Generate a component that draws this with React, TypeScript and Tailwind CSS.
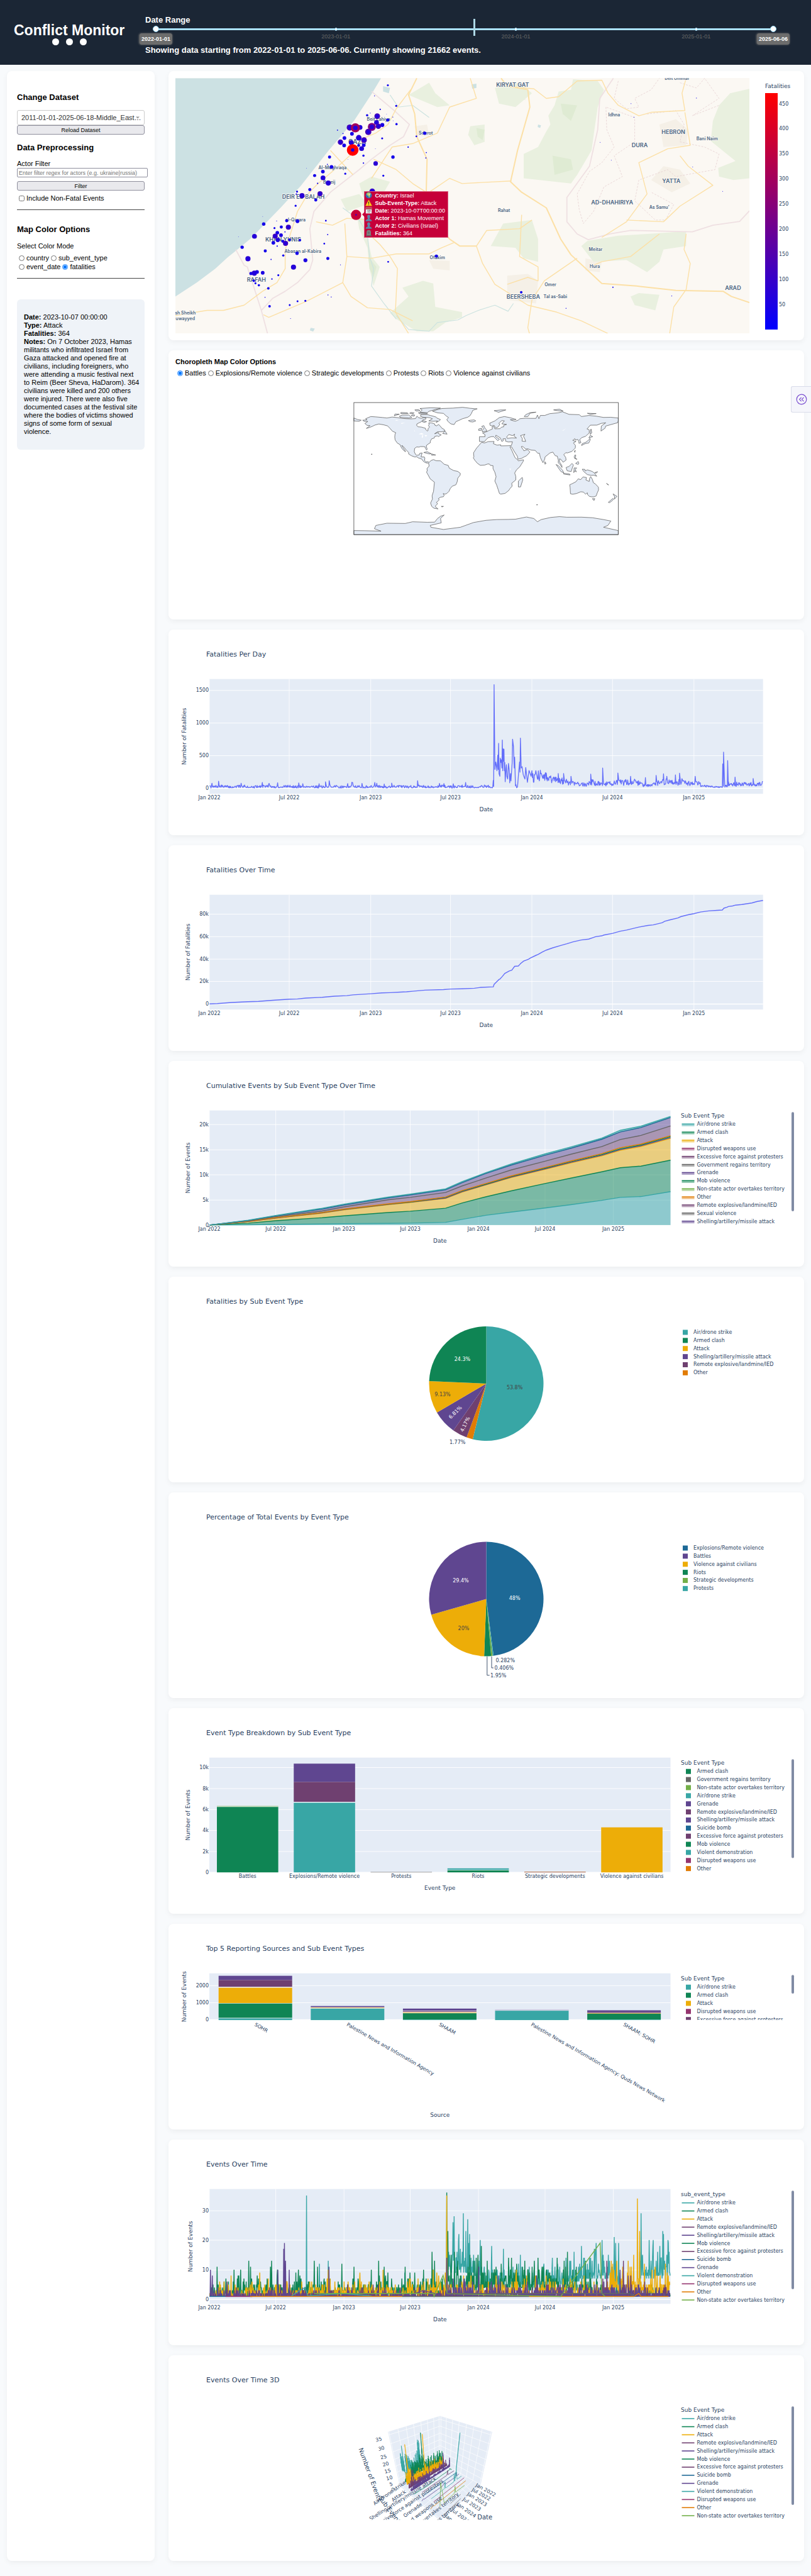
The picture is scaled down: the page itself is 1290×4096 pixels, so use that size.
import React from "react";

const TEAL = "#38A6A5";
const GREEN = "#0F8554";
const GOLD = "#EDAD08";
const MAGENTA = "#94346E";
const PLUM = "#6F4070";
const GREY = "#666666";
const PURPLE = "#5F4690";
const LIME = "#73AF48";
const ORANGE = "#E17C05";
const BLUE = "#1D6996";
const INK = "#2a3f5f";
const PLOT = "#E5ECF6";

type Pt = [number, number];

function makeRandom(seed: number) {
  let s = seed;
  return () => {
    s = (s * 1664525 + 1013904223) % 4294967296;
    return s / 4294967296;
  };
}

function interp(anchors: Pt[], x: number) {
  for (let i = 1; i < anchors.length; i++) {
    if (x <= anchors[i][0]) {
      const [x0, y0] = anchors[i - 1];
      const [x1, y1] = anchors[i];
      return y0 + ((y1 - y0) * (x - x0)) / (x1 - x0 || 1);
    }
  }
  return anchors[anchors.length - 1][1];
}

const toPoints = (p: Pt[]) => p.map(([x, y]) => `${x.toFixed(1)},${y.toFixed(1)}`).join(" ");

/* ---------- shared chart parts ---------- */

function Txt({
  x,
  y,
  children,
  anchor = "start",
  size = "text-[8px]",
  rotate,
  fill = INK,
}: {
  x: number;
  y: number;
  children: React.ReactNode;
  anchor?: "start" | "middle" | "end";
  size?: string;
  rotate?: number;
  fill?: string;
}) {
  return (
    <text
      x={x}
      y={y}
      fill={fill}
      textAnchor={anchor}
      dominantBaseline="central"
      className={size}
      transform={rotate === undefined ? undefined : `rotate(${rotate} ${x} ${y})`}
    >
      {children}
    </text>
  );
}

const CARD = "rounded-lg bg-white shadow-[0_3px_8px_rgba(0,0,0,0.05)]";

function ChartCard({ title, children }: { title: string; children: React.ReactNode }) {
  return (
    <section className={`${CARD} flex flex-col font-['DejaVu_Sans',sans-serif]`}>
      <h2 className="pt-8 pl-[60px] text-[11px] leading-4 text-[#2a3f5f]">{title}</h2>
      <svg viewBox="0 48 1011 279" className="block w-full" role="img" aria-label={title}>
        {children}
      </svg>
    </section>
  );
}

type Tick = [number, string];

function Axes({
  right,
  top = 78.7,
  bottom = 261.2,
  xt,
  yt,
  xTitle,
  yTitle,
  yTitleX = 31,
  xTitleY = 286,
}: {
  right: number;
  top?: number;
  bottom?: number;
  xt: Tick[];
  yt: Tick[];
  xTitle: string;
  yTitle: string;
  yTitleX?: number;
  xTitleY?: number;
}) {
  return (
    <g>
      <rect x="65" y={top} width={right - 65} height={bottom - top} fill={PLOT} />
      {xt.map(([x, l]) => (
        <g key={l}>
          <line x1={x} x2={x} y1={top} y2={bottom} stroke="#fff" strokeWidth=".8" />
          <Txt x={x} y={267} anchor="middle">
            {l}
          </Txt>
        </g>
      ))}
      {yt.map(([y, l]) => (
        <g key={l}>
          <line x1="65" x2={right} y1={y} y2={y} stroke="#fff" strokeWidth={l === "0" ? 1.5 : 0.9} />
          <Txt x={64} y={y} anchor="end">
            {l}
          </Txt>
        </g>
      ))}
      <Txt x={(65 + right) / 2} y={xTitleY} anchor="middle" size="text-[9px]">
        {xTitle}
      </Txt>
      <Txt x={yTitleX} y={(top + bottom) / 2} anchor="middle" size="text-[9px]" rotate={-90}>
        {yTitle}
      </Txt>
    </g>
  );
}

type Item = [string, string];

function Legend({
  title,
  items,
  kind,
  bar,
}: {
  title?: string;
  items: Item[];
  kind: "area" | "line" | "box" | "pie";
  bar?: number;
}) {
  const first = title ? 100.7 : 88.5;
  return (
    <g>
      {title && (
        <Txt x={815} y={87.3} size="text-[9px]">
          {title}
        </Txt>
      )}
      {items.map(([label, color], i) => {
        const y = first + i * 12.87;
        return (
          <g key={label}>
            {kind === "area" && (
              <>
                <rect x="816.5" y={y} width="20" height="3" fill={color} opacity=".5" />
                <line x1="816.5" x2="836.5" y1={y - 0.5} y2={y - 0.5} stroke={color} strokeWidth="1.5" />
              </>
            )}
            {kind === "line" && (
              <line x1="816.5" x2="836.5" y1={y} y2={y} stroke={color} strokeWidth="1.6" />
            )}
            {kind === "box" && <rect x="823" y={y - 4} width="8" height="8" fill={color} />}
            {kind === "pie" && <rect x="818" y={y - 4} width="8" height="8" fill={color} />}
            <Txt x={kind === "pie" ? 835 : 840.5} y={y}>
              {label}
            </Txt>
          </g>
        );
      })}
      {bar && <rect x="991" y="81.3" width="4" height={bar - 81.3} rx="2" fill="#808BA4" />}
    </g>
  );
}

/* ---------- fatalities line charts ---------- */

const WIDE_X: Tick[] = [
  [65, "Jan 2022"],
  [192, "Jul 2022"],
  [321.7, "Jan 2023"],
  [448.6, "Jul 2023"],
  [578, "Jan 2024"],
  [706.3, "Jul 2024"],
  [835.8, "Jan 2025"],
];
const NARROW_X: Tick[] = [
  [65, "Jan 2022"],
  [170.6, "Jul 2022"],
  [279.2, "Jan 2023"],
  [384.5, "Jul 2023"],
  [493, "Jan 2024"],
  [599, "Jul 2024"],
  [707.6, "Jan 2025"],
];

function FatalitiesPerDay() {
  const rnd = makeRandom(7);
  const pts: Pt[] = [];
  for (let x = 106; x < 796; x += 1.2) {
    const spike = rnd() > 0.97 ? 14 : 0;
    pts.push([x, 594 - (1 + Math.pow(rnd(), 1.5) * 9 + 2.5 * Math.sin(x / 17) * Math.sin(x / 17) + spike)]);
  }
  for (const [x, y] of [[128, 568], [388, 570], [397, 566], [452, 572], [549, 575], [612, 566], [323, 574]] as Pt[]) {
    const at = pts.findIndex((p) => p[0] >= x);
    pts[at] = [x, y];
  }
  const burst: Pt[] = [
    [796, 565], [797, 587], [798, 216], [800, 525], [802, 498], [803, 505], [805, 530], [807, 473], [808, 525],
    [809, 430], [810, 540], [812, 550], [813, 484], [815, 500], [816, 490], [817, 520], [818, 418], [819, 530],
    [820, 450], [821, 495], [822, 451], [823, 530], [824, 500], [825, 570], [827, 520], [828, 508], [829, 550],
    [831, 560], [833, 503], [835, 530], [836, 574], [838, 540], [839, 567], [842, 500], [843, 415], [845, 440],
    [847, 520], [848, 480], [850, 585], [851, 580], [853, 592], [855, 588], [857, 550], [860, 498], [861, 535],
    [862, 411], [864, 520], [866, 515], [869, 545], [873, 560], [875, 518], [879, 572], [883, 529], [888, 550],
  ];
  pts.push(...burst);
  const level: Pt[] = [
    [888, 48], [912, 48], [930, 38], [960, 28], [990, 24], [1020, 13], [1035, 24], [1060, 16], [1100, 22],
    [1140, 26], [1165, 12], [1185, 16], [1215, 28], [1240, 22], [1255, 28], [1275, 18], [1290, 22], [1310, 9],
    [1350, 5], [1352, 5], [1380, 16], [1420, 16], [1452, 18],
  ];
  for (let x = 890; x < 1452; x += 1.2) {
    const m = interp(level, x);
    pts.push([x, 594 - m * (0.45 + rnd() * 0.95)]);
  }
  const spikes: Pt[] = [
    [925, 539], [954, 540], [967, 540], [985, 550], [1033, 542], [1062, 520], [1099, 538], [1130, 550],
    [1166, 555], [1192, 547], [1210, 541], [1218, 550], [1239, 545], [1249, 539], [1287, 550], [1354, 505],
    [1356, 462], [1358, 553], [1366, 493], [1368, 570], [1384, 553], [1428, 558],
  ];
  spikes.forEach(([x, y]) => {
    const at = pts.findIndex((p) => p[0] >= x && p[0] > 888);
    if (at > 0) pts[at] = [x, y];
  });
  return (
    <ChartCard title="Fatalities Per Day">
      <Axes
        right={945.7}
        xt={WIDE_X}
        yt={[[96.8, "1500"], [148.7, "1000"], [200.6, "500"], [252.5, "0"]]}
        xTitle="Date"
        yTitle="Number of Fatalities"
        yTitleX={25}
      />
      <g transform="matrix(.6541 0 0 .4362 -4.06 -6.6)">
        <polyline points={toPoints(pts)} fill="none" stroke="#636EFA" strokeWidth="1.3" strokeLinejoin="round" vectorEffect="non-scaling-stroke" />
      </g>
    </ChartCard>
  );
}

function FatalitiesOverTime() {
  return (
    <ChartCard title="Fatalities Over Time">
      <Axes
        right={945.7}
        xt={WIDE_X}
        yt={[[109.6, "80k"], [145.3, "60k"], [181.1, "40k"], [216.5, "20k"], [252.6, "0"]]}
        xTitle="Date"
        yTitle="Number of Fatalities"
      />
      <g transform="matrix(.6541 0 0 .4362 -4.06 -349.3)">
        <polyline
          points="106,1379 125,1378 160,1374 200,1371 225,1370 260,1366 300,1362 320,1361 340,1358 380,1355 410,1351 440,1349 455,1346 498,1342 525,1339 545,1338 570,1336 585,1335 600,1333 630,1329 675,1327 692,1325 720,1324 750,1322 765,1319 796,1317 798,1308 804,1299 810,1290 812,1289 818,1279 824,1268 835,1259 841,1256 848,1242 857,1241 860,1236 863,1231 870,1223 882,1216 886,1212 900,1202 905,1199 915,1190 925,1183 940,1175 960,1166 975,1160 990,1153 1010,1146 1028,1143 1045,1134 1060,1131 1065,1128 1086,1122 1105,1114 1120,1110 1150,1099 1172,1093 1185,1091 1207,1083 1213,1078 1225,1073 1245,1066 1252,1061 1270,1054 1284,1050 1300,1044 1320,1040 1340,1038 1353,1037 1357,1030 1364,1027 1368,1024 1378,1022 1385,1019 1400,1017 1425,1011 1437,1006 1452,1002"
          fill="none"
          stroke="#636EFA"
          strokeWidth="1.4"
          vectorEffect="non-scaling-stroke"
        />
      </g>
    </ChartCard>
  );
}

/* ---------- stacked cumulative chart ---------- */

const STACK_X = [106, 200, 267, 380, 433, 540, 594, 680, 720, 778, 840, 922, 985, 1060, 1105, 1155, 1227];
const LAYERS: { y: number[]; color: string }[] = [
  { color: TEAL, y: [623, 622, 621, 619, 618, 617, 616, 613, 602, 587, 575, 560, 548, 532, 521, 518, 500] },
  { color: GREEN, y: [623, 616, 607, 596, 589, 577, 572, 561, 542, 519, 497, 470, 450, 427, 412, 406, 384] },
  { color: GOLD, y: [623, 610, 597, 579, 567, 548, 540, 525, 502, 475, 448, 418, 394, 368, 348, 334, 304] },
  { color: PLUM, y: [623, 610, 597, 578, 566, 547, 539, 524, 500, 474, 446, 416, 392, 366, 345, 331, 301] },
  { color: GREEN, y: [623, 609, 596, 577, 565, 546, 538, 521, 498, 472, 444, 413, 389, 363, 342, 328, 297] },
  { color: ORANGE, y: [623, 609, 596, 577, 564, 545, 537, 520, 496, 470, 442, 411, 387, 360, 338, 325, 294] },
  { color: PLUM, y: [623, 607, 592, 571, 556, 530, 521, 503, 479, 450, 420, 388, 362, 334, 308, 293, 258] },
  { color: PURPLE, y: [623, 606, 589, 564, 549, 523, 512, 493, 467, 433, 402, 366, 340, 307, 280, 264, 227] },
  { color: TEAL, y: [623, 605, 588, 561, 546, 520, 509, 490, 463, 430, 398, 361, 335, 303, 274, 259, 223] },
];

const TYPES_A: Item[] = [
  ["Air/drone strike", TEAL],
  ["Armed clash", GREEN],
  ["Attack", GOLD],
  ["Disrupted weapons use", MAGENTA],
  ["Excessive force against protesters", PLUM],
  ["Government regains territory", GREY],
  ["Grenade", PURPLE],
  ["Mob violence", GREEN],
  ["Non-state actor overtakes territory", LIME],
  ["Other", ORANGE],
  ["Remote explosive/landmine/IED", PLUM],
  ["Sexual violence", GREY],
  ["Shelling/artillery/missile attack", PURPLE],
];

function CumulativeEvents() {
  return (
    <ChartCard title="Cumulative Events by Sub Event Type Over Time">
      <Axes
        right={798.5}
        xt={NARROW_X}
        yt={[[101.1, "20k"], [141.3, "15k"], [181, "10k"], [221.2, "5k"], [261, "0"]]}
        xTitle="Date"
        yTitle="Number of Events"
      />
      <g transform="matrix(.6541 0 0 .4318 -4.06 -8.1)">
        {LAYERS.map((l, i) => {
          const top: Pt[] = l.y.map((y, k) => [STACK_X[k], y]);
          const base: Pt[] = (i ? LAYERS[i - 1].y : l.y.map(() => 623)).map((y, k) => [STACK_X[k], y]);
          return <polygon key={i} points={toPoints([...top, ...base.reverse()])} fill={l.color} opacity=".5" />;
        })}
        {LAYERS.map((l, i) => (
          <polyline
            key={i}
            points={toPoints(l.y.map((y, k) => [STACK_X[k], y]))}
            fill="none"
            stroke={i === 6 ? GREY : i === 7 ? BLUE : i === 3 ? PURPLE : l.color}
            strokeWidth="1.4"
            vectorEffect="non-scaling-stroke"
          />
        ))}
      </g>
      <Legend title="Sub Event Type" items={TYPES_A} kind="area" bar={239} />
    </ChartCard>
  );
}

/* ---------- pies ---------- */

function Pie({ cx, cy, r, slices }: { cx: number; cy: number; r: number; slices: [number, string][] }) {
  let a = 0;
  return (
    <g>
      {slices.map(([pct, color], i) => {
        const b = a + (pct / 100) * Math.PI * 2;
        const large = b - a > Math.PI ? 1 : 0;
        const d = `M${cx} ${cy}L${cx + r * Math.sin(a)} ${cy - r * Math.cos(a)}A${r} ${r} 0 ${large} 1 ${cx + r * Math.sin(b)} ${cy - r * Math.cos(b)}Z`;
        a = b;
        return <path key={i} d={d} fill={color} />;
      })}
    </g>
  );
}

function FatalitiesPie() {
  return (
    <ChartCard title="Fatalities by Sub Event Type">
      <Pie
        cx={505.5}
        cy={170}
        r={91}
        slices={[[53.82, TEAL], [1.77, ORANGE], [4.17, PLUM], [6.81, PURPLE], [9.13, GOLD], [24.3, GREEN]]}
      />
      <Txt x={550.6} y={176} anchor="middle" fill="#444">53.8%</Txt>
      <Txt x={467.5} y={131.6} anchor="middle" fill="#fff">24.3%</Txt>
      <Txt x={436} y={187.7} anchor="middle" fill="#444">9.13%</Txt>
      <Txt x={456.4} y={215.8} anchor="middle" fill="#fff" rotate={-44}>6.81%</Txt>
      <Txt x={472} y={234.8} anchor="middle" fill="#fff" rotate={-64}>4.17%</Txt>
      <Txt x={459.7} y={263.3} anchor="middle">1.77%</Txt>
      <Legend
        kind="pie"
        items={[
          ["Air/drone strike", TEAL],
          ["Armed clash", GREEN],
          ["Attack", GOLD],
          ["Shelling/artillery/missile attack", PURPLE],
          ["Remote explosive/landmine/IED", PLUM],
          ["Other", ORANGE],
        ]}
      />
    </ChartCard>
  );
}

function EventTypePie() {
  return (
    <ChartCard title="Percentage of Total Events by Event Type">
      <Pie
        cx={505.5}
        cy={169.6}
        r={91}
        slices={[[47.96, BLUE], [0.282, TEAL], [0.406, LIME], [1.95, GREEN], [20, GOLD], [29.4, PURPLE]]}
      />
      <Txt x={550.6} y={168} anchor="middle" fill="#fff">48%</Txt>
      <Txt x={465} y={140} anchor="middle" fill="#fff">29.4%</Txt>
      <Txt x={469.5} y={216} anchor="middle" fill="#444">20%</Txt>
      <path d="M506.8 260.8V290.8H510.7M514 260.8V279H517" fill="none" stroke={INK} strokeWidth=".9" />
      <Txt x={520.5} y={267.4}>0.282%</Txt>
      <Txt x={518.6} y={279.5}>0.406%</Txt>
      <Txt x={512} y={291.7}>1.95%</Txt>
      <Legend
        kind="pie"
        items={[
          ["Explosions/Remote violence", BLUE],
          ["Battles", PURPLE],
          ["Violence against civilians", GOLD],
          ["Riots", GREEN],
          ["Strategic developments", LIME],
          ["Protests", TEAL],
        ]}
      />
    </ChartCard>
  );
}

/* ---------- bars ---------- */

type Seg = [number, number, string];

function Bars({ start, pitch, width, stacks }: { start: number; pitch: number; width: number; stacks: Seg[][] }) {
  return (
    <g>
      {stacks.map((s, i) =>
        s.map(([top, bottom, color], k) => (
          <rect key={`${i}-${k}`} x={start + i * pitch} y={top} width={width} height={bottom - top} fill={color} />
        )),
      )}
    </g>
  );
}

function EventBreakdown() {
  return (
    <ChartCard title="Event Type Breakdown by Sub Event Type">
      <Axes
        right={798.5}
        xt={[]}
        yt={[[94.5, "10k"], [128, "8k"], [161.4, "6k"], [194.5, "4k"], [228, "2k"], [261.2, "0"]]}
        xTitle="Event Type"
        yTitle="Number of Events"
      />
      <Bars
        start={77}
        pitch={122.25}
        width={97.6}
        stacks={[
          [[155.7, 156.6, LIME], [156.6, 157.2, "#fff"], [157.2, 261.2, GREEN]],
          [[88.3, 117.4, PURPLE], [117.4, 149.1, PLUM], [149.1, 150.4, "#fff"], [150.4, 261.2, TEAL]],
          [[260.6, 261.2, GREY]],
          [[254.8, 257.4, TEAL], [257.4, 258, "#fff"], [258, 261.2, GREEN]],
          [[260, 260.7, ORANGE], [260.7, 261.2, PLUM]],
          [[189.6, 261.2, GOLD]],
        ]}
      />
      {["Battles", "Explosions/Remote violence", "Protests", "Riots", "Strategic developments", "Violence against civilians"].map(
        (l, i) => (
          <Txt key={l} x={125.8 + i * 122.25} y={267} anchor="middle">
            {l}
          </Txt>
        ),
      )}
      <Legend
        title="Sub Event Type"
        kind="box"
        bar={238.5}
        items={[
          ["Armed clash", GREEN],
          ["Government regains territory", GREY],
          ["Non-state actor overtakes territory", LIME],
          ["Air/drone strike", TEAL],
          ["Grenade", PURPLE],
          ["Remote explosive/landmine/IED", PLUM],
          ["Shelling/artillery/missile attack", PURPLE],
          ["Suicide bomb", BLUE],
          ["Excessive force against protesters", PLUM],
          ["Mob violence", GREEN],
          ["Violent demonstration", TEAL],
          ["Disrupted weapons use", MAGENTA],
          ["Other", ORANGE],
        ]}
      />
    </ChartCard>
  );
}

function TopSources() {
  const y = (v: number) => v * 0.2257 - 10.8;
  const seg = (a: number, b: number, c: string): Seg => [y(a), y(b), c];
  return (
    <ChartCard title="Top 5 Reporting Sources and Sub Event Types">
      <Axes
        right={798.5}
        bottom={152.8}
        xt={[]}
        yt={[[98.4, "2000"], [125.5, "1000"], [152.4, "0"]]}
        xTitle="Source"
        yTitle="Number of Events"
        yTitleX={25}
        xTitleY={303.6}
      />
      <Bars
        start={79.7}
        pitch={146.6}
        width={117}
        stacks={[
          [seg(414, 444, PURPLE), seg(444, 492, PLUM), seg(492, 498, "#eef2f8"), seg(498, 606, GOLD), seg(606, 609, "#fff"), seg(609, 711, GREEN), seg(711, 714, "#fff"), seg(714, 726, TEAL)],
          [seg(627, 636, PURPLE), seg(636, 639, "#fff"), seg(639, 642, GOLD), seg(642, 645, "#fff"), seg(645, 726, TEAL)],
          [seg(645, 660, PURPLE), seg(660, 663, "#fff"), seg(663, 669, PLUM), seg(669, 672, "#fff"), seg(672, 676, GOLD), seg(676, 678, "#fff"), seg(678, 723, GREEN), seg(723, 726, TEAL)],
          [seg(654, 657, PURPLE), seg(657, 660, "#fff"), seg(660, 726, TEAL)],
          [seg(657, 669, PURPLE), seg(669, 676, PLUM), seg(676, 678, "#fff"), seg(678, 681, GOLD), seg(681, 723, GREEN), seg(723, 726, TEAL)],
        ]}
      />
      {[
        "SOHR",
        "Palestine News and Information Agency",
        "SHAAM",
        "Palestine News and Information Agency; Quds News Network",
        "SHAAM; SOHR",
      ].map((l, i) => (
        <Txt key={l} x={137.5 + i * 146.6} y={159.5} rotate={30}>
          {l}
        </Txt>
      ))}
      <defs>
        <clipPath id="legend-window">
          <rect x="800" y="78" width="200" height="74.8" />
        </clipPath>
      </defs>
      <g clipPath="url(#legend-window)">
        <Legend
          title="Sub Event Type"
          kind="box"
          bar={111}
          items={[
            ["Air/drone strike", TEAL],
            ["Armed clash", GREEN],
            ["Attack", GOLD],
            ["Disrupted weapons use", MAGENTA],
            ["Excessive force against protesters", PLUM],
          ]}
        />
      </g>
    </ChartCard>
  );
}

/* ---------- daily event counts ---------- */

const TYPES_B: Item[] = [
  ["Air/drone strike", TEAL],
  ["Armed clash", GREEN],
  ["Attack", GOLD],
  ["Remote explosive/landmine/IED", PLUM],
  ["Shelling/artillery/missile attack", PURPLE],
  ["Mob violence", GREEN],
  ["Excessive force against protesters", PLUM],
  ["Suicide bomb", BLUE],
  ["Grenade", PURPLE],
  ["Violent demonstration", TEAL],
  ["Disrupted weapons use", MAGENTA],
  ["Other", ORANGE],
  ["Non-state actor overtakes territory", LIME],
];

function daily(seed: number, mean: Pt[], floor: Pt[], spikes: Pt[]): Pt[] {
  const rnd = makeRandom(seed);
  const out: Pt[] = [];
  for (let x = 106.5; x <= 1227; x += 0.895) {
    const m = interp(mean, x);
    const f = interp(floor, x);
    const v = Math.max(1, Math.round(f + m * Math.pow(-Math.log(1 - rnd() * 0.985), 1.05)));
    out.push([x, v]);
  }
  for (const [x, v] of spikes) {
    const at = out.findIndex((p) => p[0] >= x);
    if (at >= 0) out[at] = [out[at][0], v];
  }
  return out;
}

const DAILY: { color: string; data: Pt[] }[] = [
  {
    color: TEAL,
    data: daily(
      11,
      [[106, 0.5], [682, 0.6], [686, 3.6], [760, 3.2], [830, 2.2], [1000, 2.2], [1060, 3.4], [1110, 3], [1120, 0.4], [1148, 0.4], [1152, 3], [1227, 3.4]],
      [[106, 0], [682, 0], [686, 9], [740, 8], [770, 5], [830, 4], [930, 4.5], [1000, 6], [1090, 7], [1110, 1], [1148, 0], [1152, 6], [1227, 8]],
      [[341, 35], [373, 12], [394, 13], [580, 9], [698, 26], [700, 28], [712, 22], [723, 29], [733, 27], [738, 22], [764, 20], [792, 18], [820, 17], [861, 15], [1010, 18], [1060, 20], [1090, 21], [1100, 19], [1155, 29], [1184, 18], [1201, 18], [1208, 23], [1210, 22], [1221, 19]],
    ),
  },
  {
    color: GREEN,
    data: daily(
      23,
      [[106, 1.6], [200, 2.3], [683, 2.2], [690, 2.9], [850, 3], [1000, 2.6], [1060, 1.6], [1227, 1]],
      [[106, 1], [683, 1.4], [690, 3], [850, 3], [980, 2.6], [1060, 1], [1227, 0.6]],
      [[124, 11], [201, 13], [205, 11], [256, 13], [360, 13], [427, 12], [457, 11], [517, 13], [626, 10], [647, 16], [653, 13], [682, 36], [685, 23], [767, 18], [833, 14], [840, 14], [904, 14], [976, 16], [1020, 13]],
    ),
  },
  {
    color: GOLD,
    data: daily(
      37,
      [[106, 1.3], [683, 1.8], [1040, 1.7], [1070, 2.8], [1160, 3], [1227, 2.4]],
      [[106, 0.6], [683, 1.1], [1040, 0.9], [1070, 2], [1227, 1.5]],
      [[158, 8], [228, 9], [394, 10], [471, 9], [528, 10], [649, 10], [682, 35], [852, 10], [1086, 12], [1096, 13], [1132, 11], [1146, 34], [1151, 23], [1163, 12], [1190, 10]],
    ),
  },
  {
    color: PLUM,
    data: daily(
      53,
      [[106, 0.9], [683, 1], [1040, 1.2], [1070, 1.9], [1227, 1.1]],
      [[106, 0.3], [1227, 0.5]],
      [[148, 6], [285, 5], [516, 5], [812, 6], [1072, 13], [1112, 13], [1130, 8]],
    ),
  },
  {
    color: PURPLE,
    data: daily(
      71,
      [[106, 0.9], [683, 0.7], [690, 1.4], [1100, 1.3], [1227, 0.8]],
      [[106, 0.3], [683, 0.2], [690, 0.9], [1227, 0.3]],
      [[108, 10], [112, 8], [272, 10], [286, 17], [288, 19], [290, 13], [299, 10], [396, 11], [682, 14], [760, 11], [808, 8], [901, 8], [1104, 10]],
    ),
  },
];

function EventsOverTime() {
  return (
    <ChartCard title="Events Over Time">
      <Axes
        right={798.5}
        xt={NARROW_X}
        yt={[[113.3, "30"], [160, "20"], [207.5, "10"], [254.3, "0"]]}
        xTitle="Date"
        yTitle="Number of Events"
        yTitleX={35}
      />
      <g transform="matrix(.6541 0 0 .2257 -4.06 -10.8)" fill="none">
        {DAILY.map((s, i) => (
          <polyline
            key={i}
            points={toPoints(s.data.map(([x, v]) => [x, 1173.5 - v * 20.9]))}
            stroke={s.color}
            strokeWidth="1.4"
            strokeLinejoin="bevel"
            vectorEffect="non-scaling-stroke"
          />
        ))}
        <g strokeWidth="1.4">
          <polyline points="305,1150 338,1090 345,1150 430,1132 500,1150" stroke={TEAL} vectorEffect="non-scaling-stroke" />
          <polyline points="590,1150 625,1112 665,1140" stroke={PURPLE} vectorEffect="non-scaling-stroke" />
          <polyline points="106,1153 145,1153" stroke={BLUE} vectorEffect="non-scaling-stroke" />
          <polyline points="145,1153 210,1153" stroke={MAGENTA} vectorEffect="non-scaling-stroke" />
          <polyline points="205,1153 575,1153" stroke={ORANGE} vectorEffect="non-scaling-stroke" />
          <polyline points="575,1153 883,1153" stroke={GREY} vectorEffect="non-scaling-stroke" />
          <polyline points="883,1153 1138,1153 1150,1132 1155,1153 1222,1153" stroke={ORANGE} vectorEffect="non-scaling-stroke" />
          <polyline points="360,1132 650,1132 652,1153 674,1005 684,1134 960,1153 1056,777 1060,1132 1068,1153" stroke={LIME} vectorEffect="non-scaling-stroke" />
          <polyline points="684,1132 1125,1132 1140,1150" stroke={GREY} vectorEffect="non-scaling-stroke" />
        </g>
      </g>
      <Legend title="sub_event_type" items={TYPES_B} kind="line" bar={238} />
    </ChartCard>
  );
}

/* ---------- 3D chart ---------- */

function EventsOverTime3D() {
  const px = (x: number) => x * 0.2257 + 287;
  const py = (y: number) => y * 0.2257 + 89.4;
  const backY = [55, 103, 153, 198, 240, 280, 318, 355];
  const sideY = [165, 228, 288, 340, 388, 430, 475, 515];
  const sideX = [280, 292, 303, 315, 326, 336, 346, 356];
  const tops = [281, 345, 403, 455, 507, 553, 597, 635];
  const runs: [number, number, number, number, number][] = [
    [645, 372, 385, 480, 8],
    [660, 365, 400, 505, 8],
    [672, 378, 412, 532, 8.5],
    [692, 388, 425, 550, 9],
    [710, 395, 440, 568, 7],
  ];
  const flats: [string, string][] = [
    ["725,405 718,410 712,400 705,415 660,445 560,520 460,582", GREEN],
    ["741,418 697,445 696,415 690,450 515,570", PLUM],
    ["757,430 535,587", BLUE],
    ["775,441 757,455 758,430 750,462 680,512 672,503 660,525 530,618 525,615 514,631", PURPLE],
    ["793,455 762,478 756,400 783,150 750,470 752,430 746,490 742,440 740,495 680,540 678,495 672,545 580,616", TEAL],
    ["812,467 598,636", MAGENTA],
    ["823,488 600,665 596,662 575,688", ORANGE],
    ["815,520 752,568 748,527 744,575 672,645 646,500 642,670", LIME],
    ["788,583 715,648", "#777"],
    ["788,613 665,733", "#777"],
  ];
  const label = (x: number, y: number, a: number, t: string, anchor: "start" | "end" = "start") => (
    <Txt key={t + x} x={px(x)} y={py(y)} rotate={a} anchor={anchor}>
      {t}
    </Txt>
  );
  return (
    <ChartCard title="Events Over Time 3D">
      <defs>
        <clipPath id="scene">
          <rect x="65" y="78" width="733" height="183.4" />
        </clipPath>
      </defs>
      <g clipPath="url(#scene)">
        <g transform="matrix(.2257 0 0 .2257 287 89.4)" fill="none">
          <path d="M642 32L275 143L358 524L642 770L927 524L1010 143Z" fill={PLOT} />
          <g stroke="#fff" strokeWidth="3">
            {backY.map((b, i) => (
              <path key={i} d={`M${sideX[i]} ${sideY[i]}L642 ${b}L${1284 - sideX[i]} ${sideY[i]}`} />
            ))}
            {tops.map((t, i) => {
              const k = (642 - t) / 367;
              const bx = 642 - k * 284;
              const ty = 32 + k * 111;
              const by = 360 + k * 160;
              return (
                <g key={i}>
                  <path d={`M${t} ${ty}L${bx} ${by}L${bx + 284} ${by + 246}`} />
                  <path d={`M${1284 - t} ${ty}L${1284 - bx} ${by}L${1000 - bx} ${by + 246}`} />
                </g>
              );
            })}
          </g>
          {runs.map(([x0, y0, x1, y1, s], i) => (
            <polyline
              key={i}
              stroke={DAILY[i].color}
              strokeWidth="3.4"
              strokeLinejoin="bevel"
              points={toPoints(
                DAILY[i].data.map(([x, v]) => {
                  const t = (x - 106) / 1121;
                  const cap = i === 0 && x < 600 ? Math.min(v, 4) : v;
                  return [x0 + (x1 - x0) * t - cap * t * 1.2, y0 + (y1 - y0) * t - cap * s];
                }),
              )}
            />
          ))}
          {flats.map(([p, c], i) => (
            <polyline key={i} points={p} stroke={c} strokeWidth="3.4" />
          ))}
        </g>
        {[35, 30, 25, 20, 15, 10, 5, 0].map((v, i) => {
          const xs = [232, 250, 266, 281, 295, 307, 308, 322];
          const ys = [193, 256, 316, 366, 415, 464, 510, 549];
          return label(xs[i], ys[i], -14, String(v), "end");
        })}
        <Txt x={px(82)} y={py(258)} rotate={70} size="text-[10px]">
          Number of Events
        </Txt>
        <Txt x={px(218)} y={py(600)} rotate={53} size="text-[10px]">
          Sub Event Type
        </Txt>
        {label(398, 497, -35, "Air/drone strike", "end")}
        {label(398, 562, -35, "Attack", "end")}
        {label(612, 470, -32, "Shelling/artillery/missile attack", "end")}
        {label(663, 488, -34, "Excessive force against protesters", "end")}
        {label(512, 652, -35, "Grenade", "end")}
        {label(652, 607, -37, "Disrupted weapons use", "end")}
        {label(770, 578, -38, "Non-state actor overtakes territory", "end")}
        {label(770, 650, -40, "Government regains territory", "end")}
        {label(896, 516, 29, "Jan 2022")}
        {label(870, 548, 30, "Jul 2022")}
        {label(837, 578, 32, "Jan 2023")}
        {label(806, 615, 33, "Jul 2023")}
        {label(764, 651, 35, "Jan 2024")}
        {label(727, 692, 37, "Jul 2024")}
        {label(681, 733, 39, "Jan 2025")}
        <Txt x={px(905)} y={py(745)} size="text-[10px]">
          Date
        </Txt>
      </g>
      <Legend title="Sub Event Type" items={TYPES_B} kind="line" bar={238} />
    </ChartCard>
  );
}

/* ---------- incident map ---------- */

const DOTS: [number, number, number, string][] = [
  [1020, 16, 3, "#1000ee"], [1173, 86, 7, "#1000ee"], [1060, 111, 5, "#1000ee"], [990, 137, 3, "#1000ee"],
  [968, 152, 8, "#1000ee"], [1105, 145, 2, "#1000ee"], [1149, 165, 3, "#1000ee"], [1151, 191, 2, "#1000ee"],
  [1039, 159, 20, "#4300bb"], [1113, 187, 11, "#1000ee"], [1034, 203, 17, "#2a00d4"], [1075, 221, 14, "#1c00e2"],
  [1047, 230, 19, "#4300bb"], [1001, 234, 28, "#7d0082"], [1001, 234, 16, "#2a00d4"], [1175, 215, 8, "#1000ee"],
  [976, 270, 22, "#4800b6"], [846, 239, 22, "#4300bb"], [918, 238, 17, "#2400da"], [885, 241, 32, "#a1005d"],
  [885, 241, 16, "#2400da"], [861, 283, 13, "#1500e9"], [759, 257, 4, "#1000ee"], [798, 281, 4, "#1000ee"],
  [808, 313, 13, "#1500e9"], [909, 311, 20, "#2a00d4"], [946, 327, 20, "#4300bb"], [780, 342, 19, "#4300bb"],
  [856, 345, 17, "#2400da"], [806, 365, 13, "#1500e9"], [944, 363, 13, "#1500e9"], [908, 365, 10, "#1500e9"],
  [929, 387, 17, "#2a00d4"], [866, 397, 41, "#ff0000"], [866, 397, 12, "#1c00e2"], [942, 437, 8, "#1000ee"],
  [1074, 315, 7, "#1000ee"], [1026, 388, 2, "#1000ee"], [703, 447, 11, "#1500e9"], [832, 464, 2, "#1000ee"],
  [942, 489, 5, "#1000ee"], [688, 498, 4, "#1000ee"], [717, 516, 13, "#1500e9"], [1028, 492, 16, "#2a00d4"],
  [1150, 447, 12, "#1500e9"], [1082, 578, 7, "#1000ee"], [1257, 377, 5, "#1000ee"], [1315, 301, 6, "#1000ee"],
  [1374, 279, 12, "#1500e9"], [1385, 415, 4, "#1000ee"], [1382, 453, 4, "#1000ee"], [656, 549, 13, "#1500e9"],
  [598, 577, 11, "#1500e9"], [657, 593, 17, "#2400da"], [694, 630, 18, "#2a00d4"], [619, 632, 5, "#1000ee"],
  [814, 564, 7, "#1000ee"], [564, 676, 11, "#1500e9"], [636, 705, 18, "#4300bb"], [606, 749, 11, "#1500e9"],
  [509, 719, 18, "#3300cb"], [474, 690, 7, "#1000ee"], [469, 708, 5, "#1000ee"], [464, 790, 7, "#1000ee"],
  [541, 526, 2, "#1000ee"], [1004, 688, 20, "#3300cb"], [890, 854, 36, "#c60039"], [890, 854, 5, "#1000ee"],
  [239, 919, 12, "#1500e9"], [330, 897, 3, "#1000ee"], [401, 895, 11, "#1500e9"], [477, 899, 13, "#1500e9"],
  [677, 895, 6, "#1000ee"], [413, 941, 18, "#4300bb"], [363, 940, 11, "#1500e9"], [315, 947, 7, "#1000ee"],
  [335, 980, 13, "#1500e9"], [361, 997, 13, "#1c00e2"], [389, 974, 4, "#1000ee"], [320, 1004, 18, "#4300bb"],
  [174, 1005, 17, "#2a00d4"], [338, 1031, 15, "#1c00e2"], [307, 1051, 13, "#1500e9"], [374, 1040, 11, "#1500e9"],
  [393, 1055, 18, "#4300bb"], [421, 1029, 9, "#1500e9"], [494, 1032, 9, "#1500e9"], [690, 993, 4, "#1000ee"],
  [666, 1057, 6, "#1000ee"], [87, 1082, 12, "#1500e9"], [334, 1074, 5, "#1000ee"], [250, 1108, 11, "#1500e9"],
  [474, 1125, 12, "#1500e9"], [377, 1140, 8, "#1000ee"], [691, 1161, 11, "#1500e9"], [128, 1163, 18, "#2a00d4"],
  [533, 1174, 14, "#1c00e2"], [291, 1168, 4, "#1000ee"], [449, 1222, 18, "#2a00d4"], [780, 1206, 3, "#1000ee"],
  [1116, 1185, 6, "#1000ee"], [1456, 1145, 11, "#1500e9"], [150, 1267, 12, "#1500e9"], [173, 1265, 18, "#2a00d4"],
  [192, 1256, 13, "#1c00e2"], [232, 1262, 13, "#1c00e2"], [342, 1279, 7, "#1000ee"], [297, 1306, 5, "#1000ee"],
  [169, 1318, 9, "#1500e9"], [181, 1336, 7, "#1000ee"], [205, 1350, 8, "#1000ee"], [1114, -59, 7, "#1000ee"],
  [232, 865, 2, "#1000ee"], [61, 1008, 2, "#1000ee"],
];

const FAR_DOTS: [number, number, number][] = [
  [864, 1266, 2], [1087, 1237, 1], [1230, 1287, 0.7], [973, 1358, 0.7], [249, 1243, 2], [241, 1295, 0.8],
  [320, 1317, 1.5], [339, 1315, 1.6], [301, 1339, 1.5], [252, 1346, 2], [394, 1281, 0.8], [402, 1293, 0.7],
  [1131, 180, 0.6], [1138, 258, 0.6], [1290, 148, 0.6], [1056, 403, 0.5], [1083, 506, 0.5], [1281, 545, 0.5],
  [1354, 685, 0.5], [303, 1417, 0.6],
];

const GREENS = [
  "870,470 905,430 925,340 935,300 930,250 945,190 955,110 985,100 990,40 1050,50 1065,100 1050,200 1042,330 1035,450 1000,590 985,640 870,610",
  "1345,190 1372,120 1419,95 1419,610 1380,620 1345,600 1343,550 1385,510 1325,395 1330,280",
  "545,1385 590,1290 575,1240 625,1200 650,1215 655,1350 720,1380 720,1410 680,1440 650,1490 610,1490 560,1420",
  "1025,970 1100,940 1170,930 1265,915 1265,1000 1210,1020 1200,1090 1170,1150 1120,1080 1040,1090 1010,1000",
  "465,830 500,860 490,950 500,1060 520,1120 505,1230 495,1130 490,1010 470,900",
  "820,870 890,850 905,960 905,1090 870,1070 850,1010 790,1000",
  "590,130 640,60 655,120 690,190 660,200 620,160",
  "470,640 500,600 545,630 530,690 480,720",
  "740,310 775,300 775,400 750,420 735,360",
  "1130,1290 1150,1270 1200,1280 1190,1370 1140,1340",
  "425,730 470,700 490,760 440,800",
  "800,90 860,60 890,120 850,200 810,180",
];

const ROADS = [
  "610,34 590,130 605,240 610,370 635,500 633,690 640,820 690,960 715,1000 755,1000",
  "815,34 830,80 880,100 885,200 855,450 838,630 865,690 925,780 960,960 985,1050 1060,1215 1145,1230 1240,1255 1355,1260 1375,1290 1419,1325",
  "830,80 895,95 925,150 955,140 1000,50 1060,45 1075,120 1100,190 1150,250 1180,230 1262,220 1255,120 1265,34",
  "595,100 560,210 540,300 510,350 480,380 465,440 410,560 370,640 345,700 320,800 300,950 290,1020 290,1130 270,1210 235,1260 190,1340 140,1370 100,1370 23,1400",
  "505,500 560,560 600,640 633,690",
  "440,1060 500,1070 560,1045 640,1045 670,1010 700,980",
  "480,900 520,990 545,1060 563,1130 558,1380 590,1503",
  "755,1000 770,1100 800,1220 880,1340 950,1380 1010,1430 1075,1503",
  "890,850 860,900 780,910 755,1000",
  "1000,1070 920,1200 890,1310 880,1470 884,1503",
  "865,820 860,1060 905,1120 905,1200 880,1180 830,1220",
  "500,850 440,840 405,880 365,860",
  "435,870 440,1060 430,1210 340,1320 250,1410 237,1395",
  "430,1210 450,1290 490,1355 545,1365 600,1430",
  "640,690 690,610 720,640 840,625",
  "1262,230 1275,420 1220,440 1150,520 1170,700 1120,860 1060,950",
  "1120,850 1210,860 1250,770 1330,650 1270,540 1250,480",
  "1265,930 1260,1020 1275,1100 1265,1250 1235,1350 1225,1503",
  "740,34 755,150 690,200 660,350 600,410 550,430 500,610",
  "1030,1120 1060,1090 1130,1060 1200,930",
  "400,450 455,590",
];

const PLACES: [number, number, string, boolean][] = [
  [843, 71, "KIRYAT GAT", true], [1234, 342, "HEBRON", true], [1152, 417, "DURA", true], [1229, 624, "YATTA", true],
  [1085, 749, "AD-DHAHIRIYA", true], [869, 1292, "BEERSHEBA", true], [1379, 1240, "ARAD", true],
  [220, 1193, "RAFAH", true], [285, 961, "KHAN YUNIS", true], [334, 713, "DEIR EL-BALAH", true], [465, 398, "GAZA", true],
  [517, 271, "Beit Lahiya", false], [632, 349, "Sderot", false], [405, 548, "Al-Mughraqa", false],
  [397, 633, "Bureij", false], [315, 847, "al-Qarara", false], [333, 1029, "Abasan al-Kabira", false],
  [660, 1067, "Ofakim", false], [822, 796, "Rahat", false], [1045, 1018, "Meitar", false], [1043, 1118, "Hura", false],
  [935, 1223, "Omer", false], [947, 1291, "Tal as-Sabi", false], [1200, 777, "As Samu'", false],
  [1316, 382, "Bani Naim", false], [1090, 243, "Idhna", false], [1243, 34, "Beit Ummar", false],
  [47, 1386, "sh Sheikh", false], [47, 1417, "uwayyed", false],
];

function IncidentMap() {
  const mx = (x: number) => x * 0.6541 - 4.06;
  const my = (y: number) => y * 0.2763 + 2;
  return (
    <svg viewBox="0 0 1011 428" className="block w-full" role="img" aria-label="Incident map coloured by fatalities">
      <defs>
        <clipPath id="map-window">
          <rect x="11" y="11" width="913" height="406" />
        </clipPath>
        <linearGradient id="heat" x1="0" y1="0" x2="0" y2="1">
          <stop offset="0" stopColor="#ff0000" />
          <stop offset="1" stopColor="#0000ff" />
        </linearGradient>
      </defs>
      <g clipPath="url(#map-window)">
        <rect x="11" y="11" width="913" height="406" fill="#FBF8F3" />
        <g transform="matrix(.6541 0 0 .2763 -4.06 2)" fill="none" strokeLinejoin="round">
          <g fill="#F5F0E7">
            <polygon points="1200,300 1240,270 1270,330 1265,420 1210,430" />
            <polygon points="830,1170 880,1160 905,1200 900,1330 830,1310" />
            <polygon points="1210,540 1250,560 1275,640 1230,690 1180,620" />
            <polygon points="605,310 635,300 640,370 610,365" />
            <polygon points="830,60 860,80 875,160 840,150" />
            <polygon points="640,1080 690,1085 690,1140 650,1130" />
            <polygon points="1020,1070 1060,1090 1055,1150 1020,1140" />
          </g>
          {GREENS.map((p) => (
            <polygon key={p} points={p} fill="#E9F0DF" />
          ))}
          <g fill="#DFEBD3">
            <polygon points="940,480 985,500 990,560 945,590" />
            <polygon points="755,320 775,330 770,390 758,370" />
            <polygon points="960,180 1000,190 985,280 965,240" />
            <polygon points="492,1060 512,1120 505,1180 495,1130" />
          </g>
          <polygon
            points="23,34 523,34 502,118 458,277 396,449 328,653 280,776 207,955 171,1025 150,1065 120,1130 75,1210 23,1290"
            fill="#CCE1E3"
          />
          <g fill="#CCE1E3">
            <polygon points="528,80 545,90 542,120 528,110" />
            <polygon points="743,70 755,65 755,90 745,95" />
            <polygon points="352,1470 362,1475 358,1492 350,1485" />
            <polygon points="905,300 912,305 910,320 904,315" />
          </g>
          <g stroke="#CCE3E0" strokeWidth="1.2">
            <polyline points="845,1330 832,1375 800,1340 760,1370 730,1400 710,1425 660,1440 640,1490 590,1480 560,1400" vectorEffect="non-scaling-stroke" />
            <polyline points="430,780 470,850 490,930 495,1060 505,1130 500,1230 530,1330 560,1420" vectorEffect="non-scaling-stroke" />
            <polyline points="545,130 565,200 600,190 640,260" vectorEffect="non-scaling-stroke" />
          </g>
          <g stroke="#EFE0E2" strokeWidth="1.8">
            <polyline points="1088,34 1055,150 1050,330 1030,540 975,720 975,860 1000,930 1027,963 1080,930 1130,910 1280,918 1330,880 1395,858 1419,797" vectorEffect="non-scaling-stroke" />
            <polyline points="500,110 560,230 592,300 578,370 545,420 500,500 470,560 400,690 360,800 350,900 357,1080 350,1135 320,1210 290,1260 260,1300 232,1370" vectorEffect="non-scaling-stroke" />
            <polyline points="170,1020 190,1110 198,1120 232,1370 247,1503" vectorEffect="non-scaling-stroke" />
          </g>
          <g stroke="#E6CFD0" strokeWidth=".8" strokeDasharray="3 2">
            <polyline points="1100,50 1090,150 1120,210 1150,200 1140,150 1180,100 1200,34" vectorEffect="non-scaling-stroke" />
            <polyline points="1070,200 1072,330 1090,430 1060,520 1030,570 1000,700 1005,790 1015,870 1040,800 1065,660 1110,600 1090,480 1140,400 1140,260 1070,200" vectorEffect="non-scaling-stroke" />
            <polyline points="1170,240 1240,220 1260,300 1250,400 1310,430 1345,470 1335,560 1240,600 1220,560 1150,620 1140,740 1190,850 1215,850 1235,760 1180,690" vectorEffect="non-scaling-stroke" />
            <polyline points="1250,60 1290,90 1310,34 1345,150 1280,250 1345,190" vectorEffect="non-scaling-stroke" />
          </g>
          {ROADS.map((p, i) => (
            <polyline key={p} points={p} stroke="#FCE0A6" strokeWidth={i < 2 ? 2 : 1.4} vectorEffect="non-scaling-stroke" />
          ))}
        </g>
        <g className="font-[Inter,sans-serif] font-semibold" fill="#4A6584" stroke="#FBF8F3" strokeWidth="1.4" style={{ paintOrder: "stroke" }}>
          {PLACES.map(([x, y, t, big]) => (
            <text
              key={t}
              x={mx(x)}
              y={my(y)}
              textAnchor="middle"
              dominantBaseline="central"
              className={t === "GAZA" ? "text-[10px]" : big ? "text-[9px]" : "text-[7px]"}
            >
              {t}
            </text>
          ))}
        </g>
        <g transform="matrix(.2257 0 0 .2257 97.5 35.9)">
          {DOTS.map(([x, y, r, c], i) => (
            <g key={i}>
              <circle cx={x} cy={y} r={r} fill={c} />
              {r > 16 && r < 23 && <circle cx={x} cy={y} r={r * 0.6} fill="#2000de" />}
            </g>
          ))}
        </g>
        {FAR_DOTS.map(([x, y, r], i) => (
          <circle key={i} cx={mx(x)} cy={my(y)} r={r} fill="#1000ee" />
        ))}
      </g>
      <rect x="949" y="35" width="20" height="376" fill="url(#heat)" />
      <Txt x={949} y={24.4} size="text-[9px]">
        Fatalities
      </Txt>
      {[450, 400, 350, 300, 250, 200, 150, 100, 50].map((v, i) => (
        <Txt key={v} x={971} y={52 + i * 39.9}>
          {v}
        </Txt>
      ))}
    </svg>
  );
}

function TipIcon({ name }: { name: string }) {
  return (
    <svg viewBox="0 0 12 12" className="size-[11px] shrink-0" aria-hidden="true">
      {name === "globe" && (
        <>
          <circle cx="6" cy="6" r="5.5" fill="#2E6FB5" />
          <path d="M3 2Q6 0 9 2L9.5 4L8 5.5L8.5 8L6.5 10.5L5.5 7L3 6L2.2 4Z" fill="#A9C66B" />
          <path d="M6 3L9 4L7.5 6.5L5.5 5Z" fill="#E6D9A0" />
        </>
      )}
      {name === "warn" && (
        <>
          <path d="M6 .8L11.6 11.2H.4Z" fill="#FFD01F" stroke="#E0A800" strokeWidth=".4" />
          <path d="M6 4V8M6 9V10.2" stroke="#222" strokeWidth="1.2" />
        </>
      )}
      {name === "date" && (
        <>
          <rect x=".8" y=".8" width="10.4" height="10.6" fill="#ECEDEE" />
          <rect x=".8" y=".8" width="10.4" height="3.6" fill="#B9505A" />
          <path d="M4 6L5 5.6V10M6.4 5.8H8.6L7.2 10" stroke="#444" fill="none" strokeWidth=".8" />
        </>
      )}
      {name === "person" && (
        <path d="M6 .5C8 .5 8.8 2 8.6 4C8.4 5.8 7.6 6.4 7.4 7.4C8 8.4 11.4 8.6 11.4 11.6H.6C.6 8.6 4 8.4 4.6 7.4C4.4 6.4 3.6 5.8 3.4 4C3.2 2 4 .5 6 .5Z" fill="#5F84A8" />
      )}
      {name === "grave" && (
        <>
          <path d="M2.2 10V4.5Q2.2 .8 6 .8Q9.8 .8 9.8 4.5V10Z" fill="#7E807E" />
          <path d="M1 10H11V11.6H1Z" fill="#626462" />
          <path d="M4 4.5H8M4.4 6.3H7.6" stroke="#555" strokeWidth=".7" />
        </>
      )}
    </svg>
  );
}

const TIP: [string, string, string][] = [
  ["globe", "Country:", "Israel"],
  ["warn", "Sub-Event-Type:", "Attack"],
  ["date", "Date:", "2023-10-07T00:00:00"],
  ["person", "Actor 1:", "Hamas Movement"],
  ["person", "Actor 2:", "Civilians (Israel)"],
  ["grave", "Fatalities:", "364"],
];

function MapTooltip() {
  return (
    <div className="absolute top-[44.6%] left-[30.8%] border border-[#e8a0b4]/60 bg-[#C60039] pr-1 pl-px text-[9px] leading-3 whitespace-nowrap text-white">
      <span className="absolute top-1/2 -left-1 size-0 -translate-y-1/2 border-y-4 border-r-4 border-y-transparent border-r-[#C60039]" />
      {TIP.map(([icon, k, v]) => (
        <div key={k} className="flex items-center gap-1">
          <TipIcon name={icon} />
          <p>
            <b>{k}</b> {v}
          </p>
        </div>
      ))}
    </div>
  );
}

/* ---------- world map ---------- */

const LAND = [
  "-168,66 -162,66.5 -164,68 -157,71 -150,70.5 -141,69.7 -135,69 -128,70.3 -120,69.5 -115,68.5 -108,68 -102,67.8 -96,68.2 -94,71.5 -92,69.5 -88,68.5 -85,69.5 -82,69.5 -82,67.5 -86,66.5 -88,64 -94,61 -94.5,58.8 -92.5,57 -88,56.6 -82.5,55 -82,53 -80,51.3 -79,51.8 -79,54.5 -76.8,56.5 -78.5,58.8 -77.5,60 -78,62.4 -74,62.3 -70,61 -69.5,59 -67.5,58.3 -64.5,60.2 -62,57.5 -60,55 -57,53.5 -56,51.5 -60,50.2 -66,50.2 -70,47.5 -65,49.2 -64.5,47.5 -61,46 -65,43.6 -66.5,44.7 -70,43.7 -70.5,41.7 -74,40.6 -75.5,38 -76,36.8 -75.8,35.3 -78,34 -81,31.8 -81.3,30 -80.1,26.5 -81,25.2 -82.7,28 -83,29.5 -85.5,30 -89.5,30 -91,29.3 -94.5,29.5 -97.3,27.5 -97.7,23 -96,19.3 -94.5,18.2 -91,18.6 -90.3,20.8 -87,21.4 -88,18 -88.5,15.9 -84,15.8 -83.3,14.5 -83.7,11 -81.5,9 -79.5,9.5 -77.3,8.5 -75,11 -71.5,12.3 -68,10.7 -62,10.6 -57,6 -51.5,4.3 -50,0.5 -44,-2.7 -38.5,-3.8 -35,-6.5 -35.3,-9 -38.5,-13 -39.3,-18 -41,-22 -46,-24 -48.6,-27 -50.5,-31 -53.5,-34 -56,-34.8 -58.4,-34 -57,-36.5 -58,-38.3 -62,-39 -65,-41 -63.7,-42.7 -67.5,-46 -66,-48 -69,-51 -68.5,-52.5 -65.3,-55 -71,-54 -74,-51.5 -75.5,-47 -73,-41.5 -73.5,-37 -71.5,-31 -70.3,-18.5 -76,-14 -79.5,-7.5 -81,-5 -80,-2.5 -80.5,0 -77.5,3.5 -78.3,7.7 -80.5,7.5 -83,8.3 -85.7,10.3 -87.5,13 -92,14.5 -94.5,16.2 -97,15.8 -101.5,17.5 -105.3,19.8 -105.5,22 -109,25.7 -112.5,30 -114.8,31.7 -113,28.5 -110,24.2 -109.6,23 -112,24.6 -115,28 -117.2,32.8 -120.6,34.6 -123.8,39 -124.3,43 -124,46.5 -123,49 -127.5,51 -130.5,54.5 -134,58.2 -139.5,59.7 -146,60.8 -151.5,59.3 -154,58 -158,56.3 -163,54.8 -158,58.5 -162,59 -165,61.5 -161,64.3 -166,64.5",
  "-80,73.7 -76,72.5 -72,71.5 -68,70.3 -67,69 -62,66.8 -64,65 -68,62.8 -66,65 -72,64.5 -78,65 -73,68 -77,69.5 -85,70 -89,71 -89,73.5 -84,73.8",
  "-117,70 -105,69 -101,69.7 -105,73 -114,73 -118,71.5",
  "-125,72 -118,74.2 -124,74.4",
  "-90,77 -80,76.2 -78,78 -73,79.5 -62,82.5 -75,83 -90,82 -87,80",
  "-92,76.5 -80,75.5 -80,74.6 -91,74.8",
  "-86,65.5 -81,64 -84,63 -87,64",
  "-116,76.5 -107,76 -106,75 -116,75",
  "-102,76.5 -98,76 -99,75 -104,75.5",
  "-100,73.5 -97,73 -98,71.5 -102,72.5",
  "-97,80 -92,80.5 -90,79 -95,78.5",
  "-73,78.3 -66,76 -58,75.3 -54.5,72 -51,69.5 -53.5,67 -52,64.5 -48,61 -43.5,60 -41,64 -37,65.7 -32,68 -25,70 -22,72 -20,75 -18,79.5 -12,81.5 -22,82.3 -32,83.6 -45,82.5 -60,82 -66,80.5",
  "-24,65.5 -22,64 -18,63.5 -14,65 -16,66.4 -21,66",
  "-6,35.8 -9.8,31.5 -13,27.8 -17,21.5 -16.5,16 -17.4,14.7 -15,11 -11.5,7 -7.7,4.4 -2,4.8 2,6.2 4.5,6.3 6,4.3 9.5,4 9.5,0 12,-5 13.7,-11 12,-17 14.5,-22.5 16.5,-28.5 18.3,-34 20,-34.8 26,-33.8 31,-29.8 32.8,-27 35.5,-24 35,-20 40.5,-15.5 40.5,-10.5 39,-6 41.5,-1.7 46,2.5 51,10.5 51,12 44,10.5 43,12 39.5,15 37.2,20 35.5,24 32.5,29.8 34.9,29.5 38,24.2 42.7,16.8 43.5,12.7 48.5,14 52,16 55.2,17.5 59.8,22.5 56.5,26 51.5,24.3 51,25.8 50,26.5 48,30 50,30.2 54,26.7 57,27 61.5,25.2 67,24.8 70.5,20.8 72.7,21 74,15 77.5,8 80,13 80.3,15.8 87,21.3 91,22.5 94.3,17.5 97,17 98.5,11.5 98.3,8 100.5,6 103.5,1.5 103.3,4 100,9.3 100,13.3 102,12.5 105,8.7 109,11.6 108.5,15.3 105.8,19 108.5,21.7 111,21.4 117,23.5 121.5,28 121.8,31.5 119,35 122.5,37 118,38.5 121,40.8 121.5,39 125,39.7 126.5,37 126.5,34.5 129.3,35.5 127.5,39.5 130.5,42.3 135.5,44 140.5,48.5 140.5,53 137.5,54 142,59.2 151,59.3 157,61.7 163,62.5 157,58 156.5,51.2 162,55 163,58 170,60 179,62.5 180,65 180,69 170,70 160,69.8 150,71.5 140,72.5 130,71 127,73.5 113,74 104,77.5 98,76 87,75 80,72.5 74,72.5 72,68 70,73 68,68.5 60,68.5 54,68.8 46,68 44,66.2 40,64.6 37,65.2 33,66.6 41,67 33,69.4 25,71 18,69.5 12,65 5,62 5.5,59 8,58.2 11,59 13,55.5 16,56.5 18.7,60 17.5,62 21.5,65.5 25,65 21.5,61 28,60.3 24,59 24,57 21,56.5 19,54.4 12,54.2 10.5,57.6 8.3,57 8.7,54 4,52 1.5,50.5 -1.5,49.5 -4.7,48.5 -1.5,46.5 -1.5,43.5 -9,43.5 -9,37 -6,36.8 -2,36.8 0,39.5 3.2,42.3 7,43.5 10.3,43.7 12.5,41.5 16,38 18.3,40 13,43.6 13.5,45.6 19.5,41.8 21.5,37 23.5,38 23,40.5 26.5,40.8 26.5,37.5 30,36.3 36,36.5 34.5,31.5 30,31.2 20,31 20,32.5 15,32 10,34 11,37 3,36.8 -2,35",
  "-5,50 1.3,51.3 0,53.5 -2,56 -3,58.6 -6,57.5 -3,54.5 -5,52",
  "-10,52 -6,52.3 -6,55 -10,54",
  "49.3,-12 50,-15.5 47,-25 44,-25 44,-17",
  "52,71 57,71 60,75.5 68,77 60,76.3 54,73.5",
  "11,79 20,80 27,80 17,76.8",
  "92,80 100,81 105,78.5 97,79",
  "138,75.5 150,75 142,74",
  "130,31.5 135,34 140,35 142,39.5 141.5,41.3 139.8,39 136,36 131,34",
  "140,42 145.3,43.5 142,45.4",
  "142,46.5 144,49 143,54 142,51",
  "80,9.5 81.8,7 80.2,6",
  "120.2,23 121.5,25 121,22.2",
  "120,16 121,18.5 122.3,18.3 121.5,14 124,12.7 120.7,13.8",
  "122,7 125.5,9.7 126.4,7 125.5,5.7",
  "95.3,5.6 98.5,4 104,-2 106,-6 102,-4",
  "105.2,-6.8 108,-6.6 114,-7.5 114.4,-8.7 107,-7.7",
  "109,1.5 113,3 117,7 119,5 117.5,1 116,-4 110.5,-3",
  "119.5,-5.5 120.8,-3 123,-4.5 121.5,-1 123.5,0.8 120,1",
  "131,-0.8 134.5,-1 135,-3.3 138,-1.7 144.5,-3.8 147.5,-6 150.8,-10.4 146.5,-9 143,-9.2 138,-8.2 133,-4",
  "114,-22 114.5,-26 115,-34.3 118,-35 123.5,-33.9 129,-31.6 132.5,-32 135.5,-34.8 138,-33 138.3,-35.5 141,-38 144,-38.5 147,-38.5 150,-37.3 151.5,-33 153.3,-29 153,-25.3 149,-21 146,-19 145,-15 142.5,-10.8 141,-13.5 140.5,-17.5 136,-15.5 136.8,-12.2 132,-11.4 129,-15 125.5,-14 122.3,-18 117,-20.7",
  "144.8,-41 148.2,-41 147,-43.6",
  "173,-34.5 178.3,-37.8 175,-41.5 175,-38",
  "172.7,-40.7 174,-41.5 171,-44.5 168,-46.5 166.5,-46",
  "-84.8,22 -80,23 -74.5,20.2 -77.5,20",
  "-74,20 -68.5,18.5 -74,18.2",
  "-59,47.8 -56,51.5 -53,47",
  "-180,69 -175,67 -170,66 -173,64.5 -180,65",
  "148,-5.5 152,-4.3 150,-6.2",
  "164,-20.2 167,-22.3 166,-22",
  "-156,20 -155,19.5 -156,19",
  "-61,-51.5 -58,-51.5 -60,-52.3",
  "69,-49 70.3,-49.3 69,-49.7",
  "-180,-84.5 -165,-84.7 -143,-85.3 -152,-82 -150,-77.5 -135,-74.5 -110,-74.8 -100,-72.5 -80,-73.2 -70,-73 -66,-68 -62,-65 -57,-63.3 -62,-68 -61,-74 -76,-77.5 -75,-80 -58,-83 -35,-80 -17,-73.5 0,-70.5 15,-69.5 30,-69.3 40,-69 55,-66 65,-68 70,-72.5 75,-69.5 88,-66.6 100,-65.5 110,-66.3 130,-66.2 145,-67 160,-69.5 170,-71.5 166,-77.5 160,-80 180,-84.5 180,-90 -180,-90",
];
const SEAS = [
  "28,43 31,46.5 36,45 39,47 38,44.5 41.5,41.7 35,42 29,41.2",
  "47,45 53,46.8 51,44 53,40 54,37 49,37.5 49.5,41",
];
const LAKES = [
  "-92,47 -88,48.5 -84.5,47 -87,46.5",
  "-87.5,42 -87,45.5 -85.5,45.5 -86.5,42",
  "-84,45.8 -80,45.5 -82,43.5",
  "-123,66.5 -119,66 -123,65",
  "-116,62 -110,62.8 -115,61",
  "31.8,0 34,0 33,-2.5",
  "104,51.7 109.5,55.5 105,51.5",
  "-98,53 -96.5,50.5 -97.5,51",
];

function WorldMap() {
  return (
    <svg viewBox="0 47 1011 381" className="block w-full" role="img" aria-label="World choropleth map">
      <g transform="matrix(1.168 0 0 -1.166 505.1 188.1)" fill={PLOT} stroke="#444" strokeWidth=".65" strokeLinejoin="round">
        {LAND.map((p, i) => (
          <polygon key={i} points={p} vectorEffect="non-scaling-stroke" />
        ))}
        {SEAS.map((p, i) => (
          <polygon key={i} points={p} fill="#fff" vectorEffect="non-scaling-stroke" />
        ))}
        {LAKES.map((p, i) => (
          <polygon key={i} points={p} fill="#fff" stroke="none" />
        ))}
      </g>
      <rect x="294.9" y="83.1" width="420.5" height="210" fill="none" stroke="#444" strokeWidth=".8" />
    </svg>
  );
}

/* ---------- controls ---------- */

const RADIO = "m-0 size-[9px] shrink-0 accent-[#0a7aff]";
const BUTTON = "block h-[15px] w-full rounded-[3px] border border-[#8f8f9d] bg-[#e9e9ed] text-center text-[9px] leading-[12px]";

function Radio({ name, label, checked }: { name: string; label: string; checked?: boolean }) {
  return (
    <label className="inline-flex items-center gap-[3px]">
      <input type="radio" name={name} defaultChecked={checked} className={RADIO} />
      {label}
    </label>
  );
}

const RANGE =
  "pointer-events-none absolute -inset-x-[5px] top-0 m-0 h-3 w-[calc(100%+10px)] appearance-none bg-transparent [&::-webkit-slider-thumb]:pointer-events-auto [&::-webkit-slider-thumb]:size-[10px] [&::-webkit-slider-thumb]:appearance-none [&::-webkit-slider-thumb]:rounded-full [&::-webkit-slider-thumb]:border [&::-webkit-slider-thumb]:border-[#96dbfa] [&::-webkit-slider-thumb]:bg-white";

function Header() {
  return (
    <header className="flex h-[103px] bg-[#1B2635] text-white">
      <div className="w-[231px] shrink-0 pt-9 pl-[22px]">
        <div className="w-[176px]">
          <h1 className="text-[23px] leading-6 font-bold whitespace-nowrap">Conflict Monitor</h1>
          <div className="mt-px flex justify-center gap-[11px]">
            <i className="size-[11px] rounded-full bg-white" />
            <i className="size-[11px] rounded-full bg-white" />
            <i className="size-[11px] rounded-full bg-white" />
          </div>
        </div>
      </div>
      <div className="min-w-0 grow pt-6">
        <h2 className="text-[13px] leading-4 font-bold">Date Range</h2>
        <div className="relative mr-[60px] ml-[17px] h-8">
          <div className="absolute inset-x-0 top-[5px] h-[3px] bg-[#ABE2FB]" />
          {[
            ["29.15%", "2023-01-01"],
            ["58.3%", "2024-01-01"],
            ["87.5%", "2025-01-01"],
          ].map(([left, l]) => (
            <div key={l} className="absolute top-1 flex -translate-x-1/2 flex-col items-center" style={{ left }}>
              <i className="size-[5px] rounded-full border border-[#96dbfa] bg-white" />
              <span className="mt-1 text-[9px] leading-[10px] text-[#666]">{l}</span>
            </div>
          ))}
          <div className="absolute -top-[10px] left-[51.4%] h-[27px] w-[3px] bg-[#ADD8E6]" />
          <input type="range" aria-label="Start date" min="0" max="1252" defaultValue="0" className={RANGE} />
          <input type="range" aria-label="End date" min="0" max="1252" defaultValue="1252" className={RANGE} />
          <span className="absolute top-[13px] left-0 -translate-x-1/2 rounded-[4px] bg-[#6c6c6c] px-[3px] py-1 text-[9px] leading-[10px] font-bold whitespace-nowrap shadow-[0_0_3px_#6c6c6c]">
            2022-01-01
          </span>
          <span className="absolute top-[13px] left-full -translate-x-1/2 rounded-[4px] bg-[#6c6c6c] px-[3px] py-1 text-[9px] leading-[10px] font-bold whitespace-nowrap shadow-[0_0_3px_#6c6c6c]">
            2025-06-06
          </span>
        </div>
        <p className="text-[13px] leading-4 font-bold">
          Showing data starting from 2022-01-01 to 2025-06-06. Currently showing 21662 events.
        </p>
      </div>
    </header>
  );
}

function Sidebar() {
  return (
    <aside className={`${CARD} w-[235px] shrink-0 px-4 pt-[34px] text-[11px] leading-[13px]`}>
      <h3 className="text-[13px] leading-4 font-bold">
        <label htmlFor="dataset">Change Dataset</label>
      </h3>
      <div className="relative mt-3">
        <select id="dataset" className="block h-6 w-full appearance-none rounded-[3px] border border-[#ccc] bg-white pl-1.5 text-[11px] text-[#333]">
          <option>2011-01-01-2025-06-18-Middle_East…</option>
        </select>
        <svg viewBox="0 0 22 8" className="pointer-events-none absolute top-2 right-[7px] h-2 w-[22px]" aria-hidden="true">
          <path d="M3 1.5L7 6M7 1.5L3 6" stroke="#999" strokeWidth="1" />
          <path d="M15 2.5H21L18 5.5Z" fill="#999" />
        </svg>
      </div>
      <button type="button" className={BUTTON}>Reload Dataset</button>
      <h3 className="mt-[13px] text-[13px] leading-4 font-bold">Data Preprocessing</h3>
      <label htmlFor="actor" className="mt-[11px] block">Actor Filter</label>
      <input
        id="actor"
        type="text"
        placeholder="Enter filter regex for actors (e.g. ukraine|russia)"
        className="block h-[15px] w-[208px] rounded-[2px] border border-[#8f8f9d] bg-white px-0.5 text-[9px] placeholder:text-[#757575]"
      />
      <button type="button" className={`${BUTTON} mt-1.5`}>Filter</button>
      <label className="mt-1.5 ml-[3px] flex h-3 items-center gap-[3px]">
        <input type="checkbox" className="m-0 size-[9px]" />
        Include Non-Fatal Events
      </label>
      <hr className="mt-3 border-[#444]" />
      <h3 className="mt-[23px] text-[13px] leading-4 font-bold">Map Color Options</h3>
      <p className="mt-3">Select Color Mode</p>
      <div className="mt-[5px] ml-[3px] leading-[14px]">
        <div className="flex gap-[3px]">
          <Radio name="mode" label="country" />
          <Radio name="mode" label="sub_event_type" />
        </div>
        <div className="flex gap-[3px]">
          <Radio name="mode" label="event_date" />
          <Radio name="mode" label="fatalities" checked />
        </div>
      </div>
      <hr className="mt-[11px] border-[#444]" />
      <div className="mt-[33px] rounded-md bg-[#EFF3F8] py-[22px] pr-[7px] pl-[11px]">
        <p><b>Date:</b> 2023-10-07 00:00:00</p>
        <p><b>Type:</b> Attack</p>
        <p><b>Fatalities:</b> 364</p>
        <p>
          <b>Notes:</b> On 7 October 2023, Hamas militants who infiltrated Israel from Gaza attacked and opened fire at
          civilians, including foreigners, who were attending a music festival next to Reim (Beer Sheva, HaDarom). 364
          civilians were killed and 200 others were injured. There were also five documented cases at the festival site
          where the bodies of victims showed signs of some form of sexual violence.
        </p>
      </div>
    </aside>
  );
}

export default function App() {
  return (
    <div className="relative min-h-screen overflow-x-hidden bg-[#F8FAFC] font-['Liberation_Sans',Arial,sans-serif] text-black">
      <Header />
      <div className="flex gap-[22px] px-[11px] pt-2.5 pb-6">
        <Sidebar />
        <main className="flex min-w-0 grow flex-col gap-4">
          <section className={`${CARD} relative font-['DejaVu_Sans',sans-serif]`}>
            <IncidentMap />
            <div className="font-['Liberation_Sans',Arial,sans-serif]">
              <MapTooltip />
            </div>
          </section>
          <section className={CARD}>
            <div role="radiogroup" aria-labelledby="choropleth-title" className="h-[47px] pl-[11px] text-[11px] leading-[14px]">
              <h3 id="choropleth-title" className="pt-[11px] font-bold">Choropleth Map Color Options</h3>
              <div className="mt-1 ml-[3px] flex gap-[3px]">
                <Radio name="event" label="Battles" checked />
                <Radio name="event" label="Explosions/Remote violence" />
                <Radio name="event" label="Strategic developments" />
                <Radio name="event" label="Protests" />
                <Radio name="event" label="Riots" />
                <Radio name="event" label="Violence against civilians" />
              </div>
            </div>
            <WorldMap />
          </section>
          <FatalitiesPerDay />
          <FatalitiesOverTime />
          <CumulativeEvents />
          <FatalitiesPie />
          <EventTypePie />
          <EventBreakdown />
          <TopSources />
          <EventsOverTime />
          <EventsOverTime3D />
        </main>
      </div>
      <button
        type="button"
        aria-label="Open side panel"
        className="absolute top-[614px] right-0 flex h-[42px] w-8 items-center justify-center rounded-l-[3px] border border-r-0 border-[#d9dcea] bg-[#F5F6FB]"
      >
        <svg viewBox="0 0 18 18" className="size-[18px]" fill="none" stroke="#7B4FD0" strokeWidth="1.2" aria-hidden="true">
          <circle cx="9" cy="9" r="7.8" />
          <path d="M8.6 5.8L5.6 9L8.6 12.2M12.4 5.8L9.4 9L12.4 12.2" />
        </svg>
      </button>
    </div>
  );
}
